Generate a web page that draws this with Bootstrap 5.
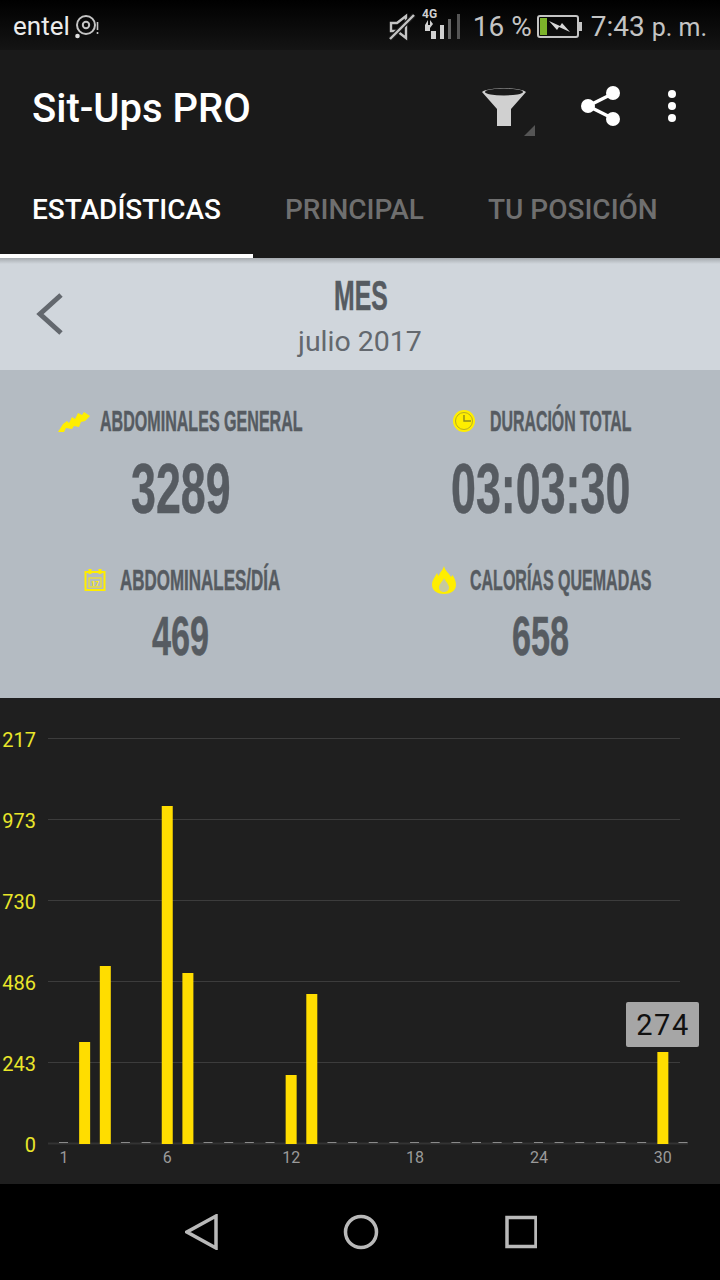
<!DOCTYPE html>
<html lang="es">
<head>
  <meta charset="UTF-8" />
  <meta name="viewport" content="width=device-width, initial-scale=1" />
  <title>Sit-Ups PRO</title>
  <link href="https://cdn.jsdelivr.net/npm/bootstrap@5.3.0/dist/css/bootstrap.min.css" rel="stylesheet" />
  <style>
    body {
      width: 720px;
      height: 1280px;
      overflow: hidden;
      background: #000;
      font-family: Roboto, "Liberation Sans", sans-serif;
    }
    .status-bar {
      height: 50px;
      padding: 3px 13px 0;
      background: linear-gradient(#000, #141414);
      color: #c4c4c4;
      font-size: 28px;
    }
    .carrier { color: #ececec; font-size: 26px; }
    .clock-suffix { font-size: 25px; }
    .ico-mute { margin-left: auto; }
    .ico-signal { margin-left: 6px; margin-top: -6px; }
    .pct-text { margin-left: 11px; }
    .ico-batt { margin-left: 5px; }
    .clock-text { margin-left: 8px; }
    .app-bar { height: 208px; background: #1a1a1a; }
    .app-title {
      height: 116px;
      padding-left: 32px;
      color: #fff;
      font-size: 40px;
      font-weight: 500;
    }
    .title-text { margin-top: 2px; }
    .ico-filter { margin-left: auto; margin-top: 7px; }
    .ico-share { margin-left: 43px; margin-top: -4px; }
    .ico-dots { margin-left: 44px; margin-right: 43px; margin-top: -4px; }
    .tab-row { height: 92px; }
    .tab-item {
      color: #6f6f6f;
      font-size: 28px;
      font-weight: 500;
      padding: 0 32px 4px;
      height: 92px;
      white-space: nowrap;
    }
    .tab-item.on { color: #fff; border-bottom: 4px solid #fff; padding-bottom: 0; width: 253px; }
    .month-bar {
      height: 112px;
      padding-top: 21px;
      background: linear-gradient(#a5aaaf, #d0d6dc 6px);
      color: #5b6066;
    }
    .ico-back { left: 35px; top: 34px; }
    /* no condensed face installed: squeeze a bold one from the left edge */
    .cond {
      font-family: "Liberation Sans", sans-serif;
      font-weight: 700;
      color: #565b61;
      display: inline-block;
      white-space: nowrap;
      transform-origin: left center;
      -webkit-text-stroke: .5px #565b61;
    }
    .month-title { font-size: 42px; line-height: 34px; width: 52px; transform: scaleX(.59); }
    .month-sub { font-size: 28.5px; line-height: 34px; margin-top: 12px; color: #63686e; }
    .stats-panel { height: 328px; background: #b4bbc2; padding-top: 36px; }
    .stat-box { height: 159px; }
    .label-line { height: 30px; }
    .stat-label { font-size: 29px; line-height: 30px; margin-left: 6px; }
    .lbl-a { width: 203px; margin-left: 2px; transform: scaleX(.554); }
    .lbl-b { width: 142px; transform: scaleX(.548); }
    .lbl-c { width: 160px; transform: scaleX(.585); }
    .lbl-d { width: 182px; transform: scaleX(.552); }
    .stat-big { font-size: 70px; line-height: 66px; margin-top: 20px; transform: scaleX(.64); }
    .big-a { width: 99px; }
    .big-b { width: 179px; }
    .stat-mid { font-size: 56px; line-height: 56px; margin-top: 13px; width: 57px; transform: scaleX(.61); }
    .chart-panel { height: 486px; background: #1f1f1f; }
    .chart-panel svg { display: block; }
    .bottom-nav { height: 96px; background: #000; padding-left: 185px; }
  </style>
</head>
<body>

<div class="status-bar d-flex align-items-center">
  <span class="carrier">entel</span>
  <svg class="ms-1" width="26" height="26" viewBox="0 0 26 26" fill="none" stroke="#c4c4c4">
    <circle cx="12" cy="11" r="9" stroke-width="2"/>
    <circle cx="12" cy="11" r="3.2" stroke-width="2"/>
    <circle cx="3.5" cy="22" r="2.3" fill="#e0e0e0" stroke="none"/>
    <path d="M23.5 8v8M23.5 18v2" stroke-width="1.6"/>
  </svg>
  <svg class="ico-mute" width="28" height="28" viewBox="0 0 28 28">
    <path d="M3 10h6l9-7v22l-9-7H3z" fill="none" stroke="#c4c4c4" stroke-width="2.4"/>
    <path d="M2 26 26 2" stroke="#1a1a1a" stroke-width="5"/>
    <path d="M2 26 26 2" stroke="#c4c4c4" stroke-width="2.4"/>
  </svg>
  <svg class="ico-signal" width="40" height="32" viewBox="0 0 40 32">
    <text x="0" y="10" font-family="Roboto" font-size="12" font-weight="700" fill="#d0d0d0">4G</text>
    <path d="M6 12v8l-3-3zM8 20v-8l3 4z" fill="#d0d0d0"/>
    <rect x="3" y="17" width="5" height="6" fill="#d0d0d0"/>
    <rect x="9" y="23" width="5" height="8" fill="#d0d0d0"/>
    <rect x="18" y="17" width="4" height="14" fill="#d0d0d0"/>
    <rect x="26" y="11" width="3" height="20" fill="#666"/>
    <rect x="35" y="6" width="3" height="25" fill="#555"/>
  </svg>
  <span class="pct-text">16 %</span>
  <svg class="ico-batt" width="46" height="24" viewBox="0 0 46 24">
    <rect x="1" y="1" width="40" height="21" rx="2" fill="none" stroke="#c4c4c4" stroke-width="2"/>
    <rect x="42" y="7" width="3" height="9" fill="#c4c4c4"/>
    <rect x="3" y="3" width="7" height="17" fill="#7cb32a"/>
    <path d="M12 6l11 5 2-3 8 9-11-5-2 3z" fill="#d8d8d8"/>
  </svg>
  <span class="clock-text text-nowrap">7:43 <span class="clock-suffix">p. m.</span></span>
</div>

<div class="app-bar">
  <div class="app-title d-flex align-items-center">
    <span class="title-text">Sit-Ups PRO</span>
    <svg class="ico-filter" width="58" height="52" viewBox="0 0 58 52">
      <path d="M2 4C8 -1 40 -1 46 4L31 21V38H17V21Z" fill="#d0d0d0" transform="translate(0,2)"/>
      <ellipse cx="24" cy="6" rx="19" ry="3.400" fill="#1a1a1a"/>
      <path d="M55 39V50H44Z" fill="#555"/>
    </svg>
    <svg class="ico-share" width="42" height="42" viewBox="0 0 42 42">
      <path d="M33 8 7 21l26 13" fill="none" stroke="#fff" stroke-width="3.4"/>
      <circle cx="32" cy="8" r="7" fill="#fff"/>
      <circle cx="7" cy="21" r="7" fill="#fff"/>
      <circle cx="32" cy="34" r="7" fill="#fff"/>
    </svg>
    <svg class="ico-dots" width="10" height="34" viewBox="0 0 10 34">
      <circle cx="5" cy="5" r="4" fill="#fff"/>
      <circle cx="5" cy="17" r="4" fill="#fff"/>
      <circle cx="5" cy="29" r="4" fill="#fff"/>
    </svg>
  </div>
  <div class="tab-row d-flex">
    <div class="tab-item on d-flex align-items-center">ESTADÍSTICAS</div>
    <div class="tab-item d-flex align-items-center">PRINCIPAL</div>
    <div class="tab-item d-flex align-items-center">TU POSICIÓN</div>
  </div>
</div>

<div class="month-bar position-relative d-flex flex-column align-items-center">
  <svg class="ico-back position-absolute" width="30" height="44" viewBox="0 0 30 44">
    <path d="M26 3 5 22l21 19" fill="none" stroke="#63686e" stroke-width="5"/>
  </svg>
  <span class="cond month-title">MES</span>
  <span class="month-sub">julio 2017</span>
</div>

<div class="stats-panel">
  <div class="row g-0 text-center">
    <div class="col-6 stat-box">
      <div class="label-line d-flex justify-content-center align-items-center gap-2">
        <svg width="32" height="24" viewBox="0 0 32 24"><path d="M0 23 5 15 9 12 11 14 14 8 17 10 20 4 24 6 26 3 32 7 27 12 23 13 21 18 16 17 14 20 8 19 6 23Z" fill="#ffee00"/></svg>
        <span class="cond stat-label lbl-a">ABDOMINALES GENERAL</span>
      </div>
      <div><span class="cond stat-big big-a">3289</span></div>
    </div>
    <div class="col-6 stat-box">
      <div class="label-line ms-1 d-flex justify-content-center align-items-center gap-2">
        <svg width="24" height="24" viewBox="0 0 24 24"><circle cx="12" cy="12" r="11" fill="#ffee00"/><circle cx="12" cy="12" r="8.500" fill="none" stroke="#b8ad20" stroke-width="1"/><path d="M12 6v6h7" fill="none" stroke="#8d8a20" stroke-width="1.4"/></svg>
        <span class="cond stat-label lbl-b">DURACIÓN TOTAL</span>
      </div>
      <div><span class="cond stat-big big-b">03:03:30</span></div>
    </div>
    <div class="col-6 stat-box">
      <div class="label-line ms-1 d-flex justify-content-center align-items-center gap-2">
        <svg width="22" height="24" viewBox="0 0 22 24" fill="none" stroke="#ffee00" stroke-width="2"><rect x="1.500" y="4" width="19" height="18"/><path d="M6 1v5M16 1v5" stroke-width="3"/><rect x="5" y="10" width="12" height="9" stroke-width="1"/><text x="11" y="18" text-anchor="middle" font-size="7" font-weight="700" fill="#ffee00" stroke="none">17</text></svg>
        <span class="cond stat-label lbl-c">ABDOMINALES/DÍA</span>
      </div>
      <div><span class="cond stat-mid">469</span></div>
    </div>
    <div class="col-6 stat-box">
      <div class="label-line ms-1 d-flex justify-content-center align-items-center gap-2">
        <svg width="24" height="28" viewBox="0 0 24 28"><path d="M12 0C13 5 17 7 19 11L20.500 9C22.500 12 24 15 24 19 24 25 18 28 12 28 6 28 0 25 0 19 0 14 3 11 5 7L6.500 10C8 6 11 4 12 0Z" fill="#ffee00"/><path d="M12 12C13 15 17 18 17 21.500 17 24.500 14.500 26 12 26 9.500 26 7 24.500 7 21.500 7 18 11 15 12 12Z" fill="#c6c9a0"/></svg>
        <span class="cond stat-label lbl-d">CALORÍAS QUEMADAS</span>
      </div>
      <div><span class="cond stat-mid">658</span></div>
    </div>
  </div>
</div>

<div class="chart-panel">
  <svg id="chart" width="720" height="486" viewBox="0 698 720 486"></svg>
</div>

<div class="bottom-nav d-flex align-items-center">
  <svg width="352" height="36" viewBox="0 0 352 36" fill="none" stroke="#b9b9b9" stroke-width="3.500">
    <path d="M31 2 2 18l29 16z"/>
    <circle cx="176" cy="18" r="15.500"/>
    <rect x="322" y="3.500" width="29" height="29"/>
  </svg>
</div>

<script>
  // chart data, pixel tops read from the screenshot
  const svg = document.getElementById('chart');
  const tops = { 2: 1042, 3: 966, 6: 806, 7: 973, 12: 1075, 13: 994, 30: 1052 };
  const base = 1144;
  const xOf = d => 64 + (d - 1) * 20.65;
  let out = '';
  [[738, '217'], [819, '973'], [900, '730'], [981, '486'], [1062, '243'], [1143, '0']].forEach(([y, t]) => {
    const isAxis = y === 1143;
    out += `<line x1="48" x2="${isAxis ? 688 : 680}" y1="${y + .5}" y2="${y + .5}" stroke="${isAxis ? '#333' : '#3c3c3c'}" stroke-width="${isAxis ? 2 : 1}"/>`;
    out += `<text x="36" y="${y + 8.5}" text-anchor="end" font-family="Roboto" font-size="20" fill="#e9e62a">${t}</text>`;
  });
  for (let d = 1; d <= 31; d++) {
    const x = xOf(d);
    if (tops[d]) {
      out += `<rect x="${x - 5.5}" y="${tops[d]}" width="11" height="${base - tops[d]}" fill="#ffdd00"/>`;
    } else {
      out += `<line x1="${x - 5}" x2="${x + 4}" y1="1142.5" y2="1142.5" stroke="#8a8a8a" stroke-width="1"/>`;
    }
  }
  [1, 6, 12, 18, 24, 30].forEach(d => {
    out += `<text x="${xOf(d)}" y="1163" text-anchor="middle" font-family="Roboto" font-size="16" fill="#9a9a9a">${d}</text>`;
  });
  out += `<rect x="626" y="1002" width="73" height="45" rx="2" fill="#a6a6a6"/>`;
  out += `<text x="663" y="1035" text-anchor="middle" font-family="Roboto" font-size="29" letter-spacing="1.500" fill="#111">274</text>`;
  svg.innerHTML = out;
</script>
<script src="https://cdn.jsdelivr.net/npm/bootstrap@5.3.0/dist/js/bootstrap.bundle.min.js"></script>
</body>
</html>
